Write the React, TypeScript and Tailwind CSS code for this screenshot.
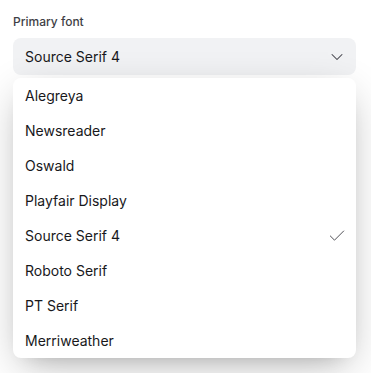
import { Check, ChevronDown } from 'lucide-react';

const fonts = [
  'Alegreya',
  'Newsreader',
  'Oswald',
  'Playfair Display',
  'Source Serif 4',
  'Roboto Serif',
  'PT Serif',
  'Merriweather',
];

const App = () => {
  const selected = 'Source Serif 4';

  return (
    <div className="h-[373px] w-full bg-white pl-[13px] pr-[15px] pt-[14px] font-['Inter',sans-serif]">
      <label className="block text-xs font-medium leading-4 text-[#3f3f46]">Primary font</label>
      <div className="relative mt-2">
        <button className="flex h-[37px] w-full items-center justify-between rounded-lg bg-[#f1f2f4] pl-3 pr-[9px] text-sm text-[#18181b]">
          <span>{selected}</span>
          <ChevronDown className="h-5 w-5 text-[#3f3f46]" strokeWidth={1.25} />
        </button>
        <div className="absolute left-0 right-0 top-[40px] z-10 overflow-hidden rounded-lg bg-white shadow-[0_12px_40px_-8px_rgba(0,0,0,0.3),0_10px_20px_-15px_rgba(0,0,0,0.2)]">
          {fonts.map((f) => (
            <div key={f} className="flex h-[35px] items-center justify-between pl-3 pr-[9px] text-sm text-[#18181b]">
              <span>{f}</span>
              {f === selected && <Check className="h-5 w-5 text-[#3f3f46]" strokeWidth={1.1} />}
            </div>
          ))}
        </div>
      </div>
    </div>
  );
};

export default App;
